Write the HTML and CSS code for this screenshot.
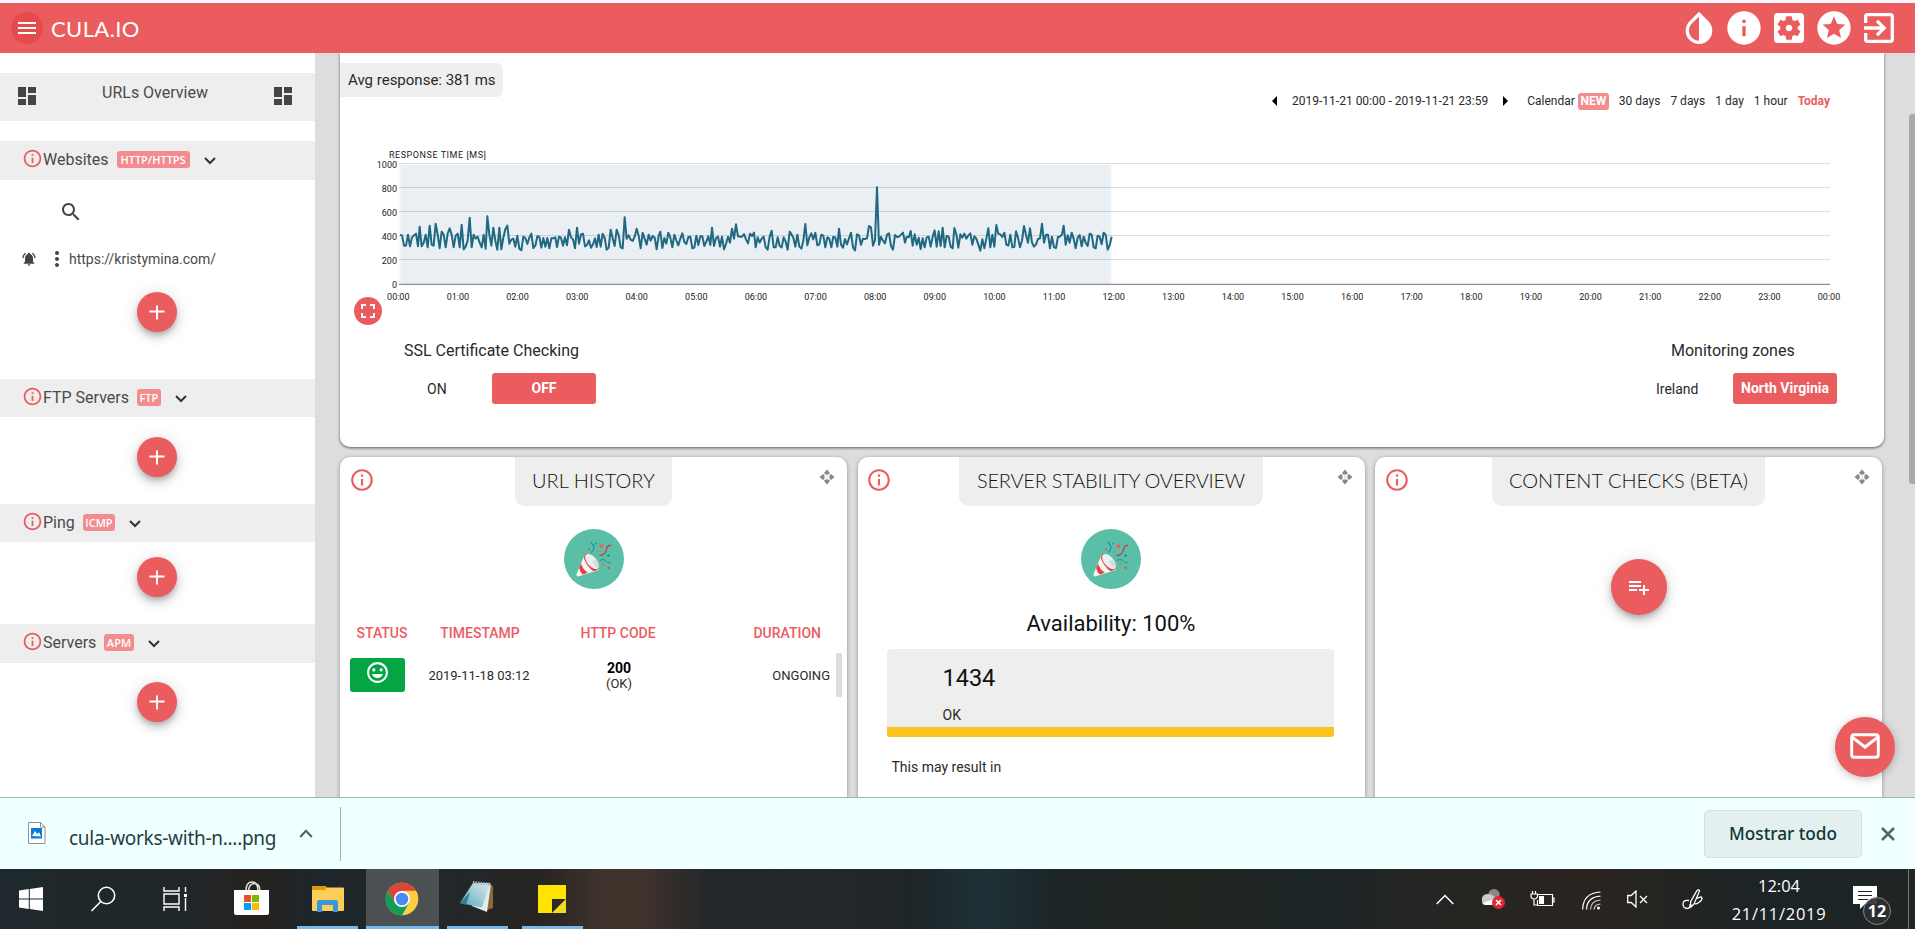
FILE: index.html
```html
<!DOCTYPE html>
<html lang="es">
<head>
<meta charset="utf-8">
<title>CULA.IO</title>
<link rel="stylesheet" href="styles.css">
</head>
<body>
<svg class="defs" width="0" height="0">
  <symbol id="info" viewBox="0 0 24 24"><path d="M11 17h2v-6h-2v6zm1-15C6.48 2 2 6.48 2 12s4.48 10 10 10 10-4.48 10-10S17.52 2 12 2zm0 18c-4.41 0-8-3.59-8-8s3.59-8 8-8 8 3.59 8 8-3.59 8-8 8zM11 9h2V7h-2v2z"/></symbol>
  <symbol id="dash" viewBox="0 0 24 24"><path d="M3 13h8V3H3v10zm0 8h8v-6H3v6zm10 0h8V11h-8v10zm0-18v6h8V3h-8z"/></symbol>
  <symbol id="plus" viewBox="0 0 24 24"><path d="M19.5 13h-6.6v7h-1.9v-7H4.500v-1.900H11V6h1.900v5.100h6.600z" transform="translate(0 -.5)"/></symbol>
  <symbol id="chev" viewBox="0 0 12 8"><path d="M1 1l5 5 5-5" fill="none" stroke="#333" stroke-width="2"/></symbol>
  <symbol id="move" viewBox="0 0 16 16"><path d="M8 .5l3 3.500-1.300 1.500H6.300L5 4zM8 15.500l3-3.500-1.300-1.500H6.300L5 12zM.5 8L4 5l1.500 1.300v3.400L4 11zM15.500 8L12 5l-1.500 1.300v3.400L12 11z"/><path d="M7.600 6h.8v4h-.8z" opacity=".5"/></symbol>
  <symbol id="party" viewBox="0 0 60 60">
    <circle cx="30" cy="30" r="30" fill="#5bbfa8"/>
    <path d="M21 25l14 16-21 6.500q-2-.5-1.500-2.500z" fill="#f5f5f5"/>
    <path d="M21 25l3.500 1 9.500 12-.5 3-4 1.300q-7-5-9.700-13.300zM17 34.500q1.500 5.500 6.800 9.300l-5 1.800q-2.800-2.200-3.700-6.500z" fill="#e8413f"/>
    <ellipse cx="28" cy="32.500" rx="9" ry="4.800" transform="rotate(50 28 32.500)" fill="#eceff0"/>
    <path d="M28 32.500l5.500 7q2-1 1-4l-3-5z" fill="#d5dadd"/>
    <g fill="none" stroke-width="1.100"><path d="M27 13q1 2 2.500 3.500 1.500 4-2.500 7" stroke="#1689b8"/><path d="M47 16.500q-4-.5-4.500 4-1 6-7 6" stroke="#c63a40" stroke-width="1.300"/><path d="M36 32q3-3 5-.5t6 2" stroke="#19a596"/></g>
    <path d="M37.500 14l.8 2h2.200l-1.700 1.300.7 2.200-2-1.300-2 1.300.7-2.200-1.700-1.300h2.200z" fill="#f15b5f"/>
    <path d="M39.200 33l.5 1.500h1.600l-1.200 1 .4 1.500-1.300-.9-1.300.9.4-1.500-1.200-1h1.600z" fill="#e07e34"/>
    <g fill="#e0504c"><circle cx="25" cy="20.500" r="1.100"/><circle cx="44.700" cy="38.800" r="1.300"/></g><circle cx="34" cy="22.500" r="1" fill="#e07e34"/><circle cx="44.500" cy="26.500" r="1.200" fill="#1689b8"/><circle cx="32.200" cy="14.500" r="1.100" fill="#19a596"/>
  </symbol>
</svg>

<header class="topbar">
  <span class="menu"><svg width="24" height="24" viewBox="0 0 24 24"><path d="M3 18h18v-2H3v2zm0-5h18v-2H3v2zm0-7v2h18V6H3z"/></svg></span>
  <span class="brand">CULA.IO</span>
  <nav class="actions">
    <svg viewBox="0 0 24 24"><path d="M17.660 7.930L12 2.270 6.340 7.930c-3.120 3.120-3.120 8.190 0 11.310C7.900 20.800 9.950 21.580 12 21.580s4.100-.78 5.660-2.340c3.120-3.120 3.120-8.190 0-11.310zM12 19.590c-1.600 0-3.110-.62-4.240-1.760C6.620 16.690 6 15.190 6 13.590s.62-3.110 1.760-4.240L12 5.100v14.490z"/></svg>
    <svg viewBox="0 0 24 24"><path d="M12 2C6.480 2 2 6.480 2 12s4.480 10 10 10 10-4.480 10-10S17.520 2 12 2zm1 15h-2v-6h2v6zm0-8h-2V7h2v2z"/></svg>
    <svg viewBox="0 0 24 24"><path d="M12 10c-1.100 0-2 .9-2 2s.9 2 2 2 2-.9 2-2-.9-2-2-2zm7-7H5c-1.110 0-2 .9-2 2v14c0 1.100.890 2 2 2h14c1.110 0 2-.9 2-2V5c0-1.100-.890-2-2-2zm-1.750 9c0 .23-.02.46-.05.68l1.480 1.160c.13.11.17.3.08.45l-1.400 2.420c-.09.15-.27.21-.43.15l-1.740-.7c-.36.28-.76.51-1.180.69l-.26 1.850c-.03.17-.18.3-.35.3h-2.800c-.17 0-.32-.13-.35-.29l-.26-1.850c-.43-.18-.82-.41-1.180-.69l-1.740.7c-.16.06-.34 0-.43-.15l-1.400-2.420c-.09-.15-.05-.34.08-.45l1.480-1.160c-.03-.23-.05-.46-.05-.69s.02-.46.05-.68l-1.480-1.160c-.13-.11-.17-.3-.08-.45l1.400-2.420c.09-.15.27-.21.430-.15l1.740.7c.36-.28.76-.51 1.180-.69l.26-1.850c.03-.17.18-.3.35-.3h2.800c.17 0 .32.130.35.29l.26 1.850c.43.180.82.41 1.180.69l1.740-.7c.16-.06.34 0 .43.15l1.400 2.420c.09.15.05.34-.08.45l-1.480 1.160c.03.230.05.460.05.690z"/></svg>
    <svg viewBox="0 0 24 24"><path d="M11.990 2C6.470 2 2 6.480 2 12s4.470 10 9.990 10C17.520 22 22 17.520 22 12S17.520 2 11.990 2zm4.240 16L12 15.450 7.770 18l1.120-4.810-3.730-3.230 4.920-.42L12 5l1.920 4.530 4.920.42-3.730 3.230L16.230 18z"/></svg>
    <svg viewBox="0 0 24 24"><path d="M10.090 15.590L11.500 17l5-5-5-5-1.410 1.410L12.670 11H3v2h9.670l-2.580 2.590zM19 3H5c-1.110 0-2 .9-2 2v4h2V5h14v14H5v-4H3v4c0 1.100.890 2 2 2h14c1.100 0 2-.9 2-2V5c0-1.100-.9-2-2-2z"/></svg>
  </nav>
</header>

<div class="page">
  <aside class="sidebar">
    <div class="overview"><svg><use href="#dash"/></svg><span>URLs Overview</span><svg><use href="#dash"/></svg></div>
    <div class="group tall"><svg class="gi"><use href="#info"/></svg><span class="gname">Websites</span><span class="tag http">HTTP/HTTPS</span><svg class="chev"><use href="#chev"/></svg></div>
    <div class="sites">
      <svg class="search" viewBox="0 0 24 24"><path d="M15.500 14h-.79l-.28-.27C15.410 12.590 16 11.110 16 9.500 16 5.910 13.090 3 9.500 3S3 5.910 3 9.500 5.910 16 9.500 16c1.610 0 3.090-.59 4.230-1.570l.27.28v.79l5 4.990L20.490 19l-4.990-5zm-6 0C7.010 14 5 11.990 5 9.500S7.010 5 9.500 5 14 7.010 14 9.500 11.990 14 9.500 14z"/></svg>
      <div class="site"><svg width="16" height="16" viewBox="0 0 24 24"><path d="M7.580 4.080L6.150 2.650C3.750 4.480 2.170 7.300 2.030 10.500h2c.15-2.650 1.510-4.970 3.550-6.420zm12.390 6.420h2c-.15-3.200-1.730-6.020-4.120-7.850l-1.420 1.430c2.020 1.450 3.390 3.770 3.540 6.420zM18 11c0-3.070-1.640-5.640-4.500-6.320V4c0-.83-.67-1.500-1.500-1.500s-1.500.67-1.500 1.500v.68C7.630 5.360 6 7.920 6 11v5l-2 2v1h16v-1l-2-2v-5zm-6 11c1.100 0 2-.9 2-2h-4c0 1.100.9 2 2 2z"/></svg><svg width="24" height="24" viewBox="0 0 24 24"><path d="M12 8c1.100 0 2-.9 2-2s-.9-2-2-2-2 .9-2 2 .9 2 2 2zm0 2c-1.100 0-2 .9-2 2s.9 2 2 2 2-.9 2-2-.9-2-2-2zm0 6c-1.100 0-2 .9-2 2s.9 2 2 2 2-.9 2-2-.9-2-2-2z"/></svg><span>https://kristymina.com/</span></div>
      <span class="fab"><svg><use href="#plus"/></svg></span>
    </div>
    <div class="group"><svg class="gi"><use href="#info"/></svg><span class="gname">FTP Servers</span><span class="tag">FTP</span><svg class="chev"><use href="#chev"/></svg></div>
    <div class="adder ftp"><span class="fab"><svg><use href="#plus"/></svg></span></div>
    <div class="group"><svg class="gi"><use href="#info"/></svg><span class="gname">Ping</span><span class="tag">ICMP</span><svg class="chev"><use href="#chev"/></svg></div>
    <div class="adder ping"><span class="fab"><svg><use href="#plus"/></svg></span></div>
    <div class="group tall"><svg class="gi"><use href="#info"/></svg><span class="gname">Servers</span><span class="tag">APM</span><svg class="chev"><use href="#chev"/></svg></div>
    <div class="adder apm"><span class="fab"><svg><use href="#plus"/></svg></span></div>
  </aside>

  <main class="content">
    <section class="card monitor">
      <div class="mhead">
        <span class="avg">Avg response: 381 ms</span>
        <div class="range"><i class="prev"></i><span class="dates">2019-11-21 00:00 - 2019-11-21 23:59</span><i class="next"></i><span class="cal">Calendar</span><span class="tag new">NEW</span><span class="opt">30 days</span><span class="opt">7 days</span><span class="opt">1 day</span><span class="opt">1 hour</span><span class="opt today">Today</span></div>
      </div>
      <svg class="chart" viewBox="340 140 1544 157">
        <defs><linearGradient id="fade" x1="0" x2="1"><stop offset="0" stop-color="#eaeff3" stop-opacity="0"/><stop offset=".006" stop-color="#eaeff3"/><stop offset=".995" stop-color="#eaeff3"/><stop offset="1" stop-color="#eaeff3" stop-opacity="0"/></linearGradient></defs>
        <rect x="398" y="165" width="715" height="119" fill="url(#fade)"/>
        <path d="M399 163.500H1830M399 187.500H1830M399 211.500H1830M399 235.500H1830M399 259.500H1830" stroke="#000" stroke-opacity=".13"/>
        <path d="M399 284.500H1830" stroke="#888d90"/><path d="M399 283.500H1830" stroke="#000" stroke-opacity=".1"/>
        <g fill="none" stroke="#1f6982" stroke-width="6" stroke-linejoin="round">
          <polyline transform="translate(340 140) scale(.33333)" points="180,284 186,286 192,317 198,317 204,284 210,319 216,292 222,286 228,281 234,319 239,260 245,319 251,308 257,284 263,322 269,257 275,314 281,317 287,251 293,284 299,325 305,275 311,284 317,322 323,281 329,265 335,284 341,322 347,287 353,281 359,322 365,254 371,328 377,320 383,302 389,233 395,322 401,284 407,296 413,290 419,308 425,322 431,284 437,326 442,229 448,284 454,317 460,263 466,302 472,329 478,263 484,328 490,293 496,268 502,257 508,311 514,299 520,296 526,320 532,287 538,326 544,331 550,290 556,294 562,312 568,293 574,281 580,324 586,317 592,289 598,290 604,323 610,294 616,320 622,294 628,325 634,295 640,295 646,292 651,321 657,290 663,293 669,317 675,292 681,316 687,269 693,292 699,298 705,325 711,263 717,311 723,283 729,281 735,319 741,315 747,301 753,323 759,313 765,295 770,321 776,284 782,320 788,281 794,294 800,329 806,323 812,269 818,295 824,318 830,269 836,285 842,322 848,325 854,232 860,296 866,286 872,299 878,303 884,290 890,266 896,287 902,325 908,278 914,296 920,314 926,284 932,302 938,288 944,293 950,328 956,287 961,275 967,324 973,294 979,311 985,278 991,293 997,322 1003,284 1009,301 1015,316 1021,296 1027,280 1033,306 1039,312 1045,291 1051,290 1057,325 1063,323 1069,287 1075,315 1081,289 1087,289 1093,318 1099,305 1105,289 1111,315 1116,263 1122,318 1128,294 1134,290 1140,320 1146,290 1152,328 1158,312 1164,290 1170,308 1176,266 1182,296 1188,253 1194,289 1200,290"/>
          <polyline transform="translate(740 140) scale(.33333)" points="0,290 6,290 12,282 18,298 24,310 30,281 36,288 42,278 47,322 53,292 59,308 65,296 71,290 77,322 83,329 89,290 95,272 101,322 107,322 113,292 119,318 125,322 131,292 137,305 143,329 149,275 155,284 160,293 166,320 172,284 178,320 184,326 190,302 196,252 202,316 208,292 214,280 220,298 226,278 232,316 238,313 244,284 250,287 256,322 262,292 268,296 274,322 280,290 286,293 292,320 297,266 303,314 309,323 315,297 321,313 327,295 333,278 339,322 345,331 351,283 357,286 363,314 369,296 375,297 381,295 387,258 393,262 399,317 405,300 411,142 417,314 423,290 429,302 435,310 441,284 447,280 453,318 459,329 465,285 471,291 477,290 483,284 489,278 495,308 500,290 506,292 512,273 518,317 524,283 530,314 536,293 542,327 548,295 554,322 560,292 566,290 572,320 578,290 584,271 590,320 596,274 602,318 608,263 614,322 620,288 626,290 632,320 638,325 643,264 649,282 655,323 661,283 667,293 673,281 679,296 685,286 691,280 697,314 703,289 709,296 715,314 721,332 727,298 733,325 739,296 745,265 751,322 757,284 763,320 769,255 775,281 781,283 787,291 793,278 799,314 805,317 811,284 817,322 823,321 828,274 834,293 840,322 846,302 852,258 858,284 864,308 870,265 876,308 882,320 888,313 894,297 900,295 906,251 912,308 918,284 924,284 930,325 936,290 942,322 948,324 954,290 960,290 966,283 971,257 977,314 983,286 989,308 995,278 1001,296 1007,325 1013,293 1019,285 1025,319 1031,290 1037,308 1043,318 1049,281 1055,284 1061,322 1067,325 1073,287 1079,290 1085,313 1091,278 1097,284 1103,329 1109,316 1115,290"/>
        </g>
        <text x="389" y="158" textLength="97">RESPONSE TIME [MS]</text>
        <g text-anchor="end"><text x="397" y="168">1000</text><text x="397" y="192">800</text><text x="397" y="216">600</text><text x="397" y="240">400</text><text x="397" y="264">200</text><text x="397" y="288">0</text></g>
        <g text-anchor="middle" class="hours"><text x="398.300" y="300">00:00</text><text x="457.900" y="300">01:00</text><text x="517.500" y="300">02:00</text><text x="577.100" y="300">03:00</text><text x="636.700" y="300">04:00</text><text x="696.300" y="300">05:00</text><text x="755.900" y="300">06:00</text><text x="815.500" y="300">07:00</text><text x="875.100" y="300">08:00</text><text x="934.800" y="300">09:00</text><text x="994.400" y="300">10:00</text><text x="1054" y="300">11:00</text><text x="1113.700" y="300">12:00</text><text x="1173.300" y="300">13:00</text><text x="1232.900" y="300">14:00</text><text x="1292.500" y="300">15:00</text><text x="1352.100" y="300">16:00</text><text x="1411.700" y="300">17:00</text><text x="1471.300" y="300">18:00</text><text x="1530.900" y="300">19:00</text><text x="1590.500" y="300">20:00</text><text x="1650.200" y="300">21:00</text><text x="1709.800" y="300">22:00</text><text x="1769.400" y="300">23:00</text><text x="1829" y="300">00:00</text></g>
      </svg>
      <span class="full"><svg width="24" height="24" viewBox="0 0 24 24"><path d="M7 14H5v5h5v-2H7v-3zm-2-4h2V7h3V5H5v5zm12 7h-3v2h5v-5h-2v3zM14 5v2h3v3h2V5h-5z"/></svg></span>
      <div class="settings">
        <div class="setting ssl"><h4>SSL Certificate Checking</h4><div class="choices"><span class="off">ON</span><b class="on">OFF</b></div></div>
        <div class="setting zones"><h4>Monitoring zones</h4><div class="choices"><span class="off">Ireland</span><b class="on">North Virginia</b></div></div>
      </div>
    </section>

    <div class="cards">
      <section class="card">
        <div class="chead"><svg class="cinfo"><use href="#info"/></svg><h3 class="t1">URL HISTORY</h3><svg class="cmove"><use href="#move"/></svg></div>
        <svg class="party"><use href="#party"/></svg>
        <div class="row thead"><b>STATUS</b><b>TIMESTAMP</b><b>HTTP CODE</b><b class="end">DURATION</b></div>
        <div class="row tbody"><span class="ok"><svg width="25" height="25" viewBox="0 0 24 24"><path d="M11.990 2C6.470 2 2 6.480 2 12s4.470 10 9.990 10C17.520 22 22 17.520 22 12S17.520 2 11.990 2zM12 20c-4.420 0-8-3.580-8-8s3.580-8 8-8 8 3.580 8 8-3.580 8-8 8zm3.500-9c.83 0 1.500-.67 1.500-1.500S16.330 8 15.500 8 14 8.670 14 9.500s.67 1.500 1.500 1.500zm-7 0c.83 0 1.500-.67 1.500-1.500S9.330 8 8.500 8 7 8.670 7 9.500 7.670 11 8.500 11zM6.800 13.500c.7 2.300 2.700 4 5.200 4s4.500-1.700 5.200-4z"/></svg></span><span>2019-11-18 03:12</span><span class="code"><b>200</b>(OK)</span><span class="end">ONGOING<i class="thumb"></i></span></div>
      </section>
      <section class="card">
        <div class="chead"><svg class="cinfo"><use href="#info"/></svg><h3 class="t2">SERVER STABILITY OVERVIEW</h3><svg class="cmove"><use href="#move"/></svg></div>
        <svg class="party"><use href="#party"/></svg>
        <p class="avail">Availability: 100%</p>
        <div class="stat"><strong>1434</strong><span>OK</span></div>
        <p class="note">This may result in</p>
      </section>
      <section class="card">
        <div class="chead"><svg class="cinfo"><use href="#info"/></svg><h3 class="t3">CONTENT CHECKS (BETA)</h3><svg class="cmove"><use href="#move"/></svg></div>
        <span class="fab big"><svg width="24" height="24" viewBox="0 0 24 24"><path d="M14 10H2v2h12v-2zm0-4H2v2h12V6zm4 8v-4h-2v4h-4v2h4v4h2v-4h4v-2h-4zM2 16h8v-2H2v2z"/></svg></span>
      </section>
    </div>
  </main>
  <i class="scrollbar"></i>
  <span class="mail"><svg width="30" height="26" viewBox="0 0 30 26"><rect x="1.700" y="1.700" width="26.600" height="22.600" rx="2.500" fill="none" stroke="#fff" stroke-width="3"/><path d="M2.500 4.500L15 14l12.500-9.500" fill="none" stroke="#fff" stroke-width="3"/></svg></span>
</div>

<div class="downloads">
  <svg class="file" width="18" height="22" viewBox="0 0 18 22"><path d="M.5.5h12l4.500 4.500v16.500H.5z" fill="#fff" stroke="#8a8f90"/><path d="M12.500.5V5H17" fill="none" stroke="#8a8f90"/><path d="M3 6h11v10.500H3z" fill="#0a78d4"/><path d="M4 14l3-5 2.500 3L11 10l2 4.500z" fill="#f3fbff"/></svg>
  <span class="fname">cula-works-with-n....png</span>
  <svg class="up" width="14" height="9" viewBox="0 0 14 9"><path d="M1.200 8L7 1.800 12.800 8" fill="none" stroke="#4d6766" stroke-width="2.200"/></svg>
  <i class="sep"></i>
  <span class="showall">Mostrar todo</span>
  <svg class="close" width="14" height="14" viewBox="0 0 14 14"><path d="M1 1l12 12M13 1L1 13" stroke="#4d6766" stroke-width="2.500"/></svg>
</div>

<footer class="taskbar">
  <span class="task w1"><svg width="24" height="24" viewBox="0 0 24 24" fill="#fff"><path d="M0 3.400l9.800-1.400v9.500H0zM10.800 1.900L24 0v11.500H10.800zM0 12.500h9.800V22L0 20.600zM10.800 12.500H24V24l-13.200-1.900z"/></svg></span>
  <span class="task w2"><svg width="26" height="26" viewBox="0 0 26 26" fill="none" stroke="#fff" stroke-width="1.600"><circle cx="16.500" cy="9.500" r="8.200"/><path d="M10.800 15.500L1.500 25"/></svg></span>
  <span class="task w3"><svg width="25" height="24" viewBox="0 0 25 24" fill="none" stroke="#fff" stroke-width="1.400"><path d="M1 0v4h15V0M1 24v-4h15v4M1 7h15v10H1zM22.500 0v5M22.500 11v13"/><path d="M21 7h3v3h-3z" fill="#fff" stroke="none"/></svg></span>
  <span class="task w4"><svg width="36" height="36" viewBox="0 0 36 36"><path d="M12 11Q12 2 18 2t6 9M14.500 11Q15 4 20 3.500q6 0 6 7.500" fill="none" stroke="#ddd" stroke-width="1.500"/><path d="M0 10h35v23q0 2-2 2H2q-2 0-2-2z" fill="#fff"/><path d="M10 15h7v7h-7z" fill="#f04e23"/><path d="M18 15h7v7h-7z" fill="#7cb800"/><path d="M10 23h7v7h-7z" fill="#00a3ee"/><path d="M18 23h7v7h-7z" fill="#feb801"/></svg></span>
  <span class="task w5 open"><svg width="32" height="28" viewBox="0 0 32 28"><path d="M0 2q0-1 1-1h11q2 0 3 1.500h16q1 0 1 1V25q0 1-1 1H1q-1 0-1-1z" fill="#fdce57"/><path d="M0 2q0-1 1-1h11q2 0 3 1.200L13 5H0z" fill="#dc9a0b"/><path d="M5 27V17q0-2 2-2h17q2 0 2 2v10h-5v-7H10v7z" fill="#3b94dc"/></svg></span>
  <span class="task w6 open active"><svg width="34" height="34" viewBox="0 0 34 34"><circle cx="17" cy="17" r="16.300" fill="#ffcd42"/><path d="M2.900 8.850A16.300 16.300 0 0 1 31.100 8.850H17l-7.100 12.300z" fill="#db4437"/><path d="M2.900 8.850A16.300 16.300 0 0 0 17 33.300l7.050-12.200L17 24.500l-7.200-3.800z" fill="#0f9d58"/><circle cx="17" cy="17" r="8" fill="#fff"/><circle cx="17" cy="17" r="6.300" fill="#4a8af4"/></svg></span>
  <span class="task w7 open"><svg width="34" height="34" viewBox="0 0 34 34"><defs><linearGradient id="np" x1="0" y1="1" x2="1" y2="0"><stop offset="0" stop-color="#4fa3b4"/><stop offset=".5" stop-color="#9ccbd6"/><stop offset="1" stop-color="#d5e9ed"/></linearGradient></defs><path d="M31 5l2 1v22l-6 2z" fill="#8b6a35"/><path d="M31 5l-4 27L12 26 15 3z" fill="#e5eaed"/><path d="M13 3h17l-8 24.500L0 23z" fill="url(#np)"/><path d="M0 23L10 12 6 25z" fill="#2e7f92"/><path d="M13 2.500l18 2" stroke="#aeb6b9" stroke-width="3" stroke-dasharray="1.500 1"/></svg></span>
  <span class="task w8 open"><svg width="28" height="28" viewBox="0 0 28 28"><path d="M0 0h28v14L14 28H0z" fill="#ffe400"/><path d="M14 14h14L14 28z" fill="#2b2a26"/><path d="M28 14v14H14z" fill="#f3dc1c"/></svg></span>
  <div class="tray">
    <svg class="t-up" width="18" height="11" viewBox="0 0 18 11"><path d="M.7 10L9 1.500l8.300 8.500" fill="none" stroke="#fff" stroke-width="1.500"/></svg>
    <svg class="t-cloud" width="25" height="20" viewBox="0 0 25 20"><path d="M7 6Q8 0 13 0q5 0 6 6l-7 7z" fill="#888"/><path d="M1 12Q0 5 7 5q5 0 8 5l3 6H4q-3 0-3-4z" fill="#c9c9c9"/><path d="M2 14l14-5 4 7H6q-3 0-4-2z" fill="#fff"/><circle cx="17.500" cy="13.500" r="6.500" fill="#dc2a30"/><path d="M15 11l5 5M20 11l-5 5" stroke="#fff" stroke-width="1.600"/></svg>
    <svg class="t-bat" width="25" height="18" viewBox="0 0 25 18"><path d="M8 4.500h14.500v11H7.500V10M23 8h1v4h-1" fill="none" stroke="#fff" stroke-width="1.200"/><path d="M9 6h5v8H9z" fill="#fff"/><path d="M2.500 1v3M5.500 1v3M1 4h6.500v2.500Q7 9 4.200 9T1 6.500zM4 9v6h3.500" fill="none" stroke="#fff" stroke-width="1.200"/></svg>
    <svg class="t-wifi" width="19" height="19" viewBox="0 0 19 19" fill="none" stroke="#fff" stroke-width="1.200"><path d="M.7 18.500Q1 2 18.500 1M4.500 18.500Q5 6 18.500 5.200" /><path d="M8.500 18.500Q9 9.500 18.500 9M12 18.500Q12.500 13.500 18.500 13" opacity=".75"/><circle cx="16.500" cy="17" r="1.500" fill="#fff" stroke="none"/></svg>
    <svg class="t-vol" width="21" height="18" viewBox="0 0 21 18" fill="none" stroke="#fff" stroke-width="1.300"><path d="M.7 5.500h3.500L9 1v16l-4.800-4.500H.7zM13 6l7 7M20 6l-7 7"/></svg>
    <svg class="t-pen" width="21" height="21" viewBox="0 0 21 21" fill="none" stroke="#fff" stroke-width="1.300"><path d="M7 11.500Q1 10.500 1 15t4.500 4.500Q8.500 19 8 15M9 18l-.5-5L15 1.500q2-1.500 2.500.5L12 15zM15 9.500q5-3 5 0 0 2-4 4.500-2 1.500-3 .5"/></svg>
    <div class="clock"><span>12:04</span><span class="date">21/11/2019</span></div>
    <div class="notif"><svg width="24" height="24" viewBox="0 0 24 24"><path d="M0 0h24v18H12l-5 5v-5H0z" fill="#fff"/><path d="M5 5.500h14M5 9.500h14M5 13.500h10" stroke="#222" stroke-width="1.200"/></svg><b>12</b></div>
    <i class="peek"></i>
  </div>
</footer>
</body>
</html>
```
FILE: styles.css
```css
* { box-sizing: border-box; }
body { margin: 0; width: 1915px; height: 929px; overflow: hidden; display: flex; flex-direction: column; font-family: Roboto, "Liberation Sans", sans-serif; color: #2a2a2a; border-top: 3px solid #f3f7fb; }
h3, h4, p { margin: 0; font-weight: 400; }
svg { display: block; flex: none; }
.defs { position: absolute; }

.topbar { height: 50px; flex: none; background: #eb5c5f; display: flex; align-items: center; padding: 0 16px 0 11px; fill: #fff; color: #fff; }
.menu { width: 32px; height: 32px; border-radius: 50%; background: #e64a4d; display: flex; align-items: center; justify-content: center; }
.brand { font-family: Lato, sans-serif; font-size: 22px; margin-left: 8px; letter-spacing: .4px; }
.actions { margin-left: auto; display: flex; gap: 5px; }
.actions svg { width: 40px; height: 40px; }

.page { position: relative; height: 744px; flex: none; display: flex; background: #ddd; overflow: hidden; }
.sidebar { width: 315px; flex: none; background: #fff; padding-top: 20px; color: #4a4a4a; fill: #444; }
.overview { height: 48px; background: #eee; display: flex; justify-content: space-between; align-items: center; padding: 0 20px 0 15px; margin-bottom: 20px; font-size: 16px; }
.overview svg { width: 24px; height: 24px; margin-top: -2px; }
.overview span { padding-bottom: 9px; }
.group { height: 38px; background: #eee; display: flex; align-items: center; padding: 0 0 1px 22px; }
.group.tall { height: 39px; padding-bottom: 2px; }
.gi { width: 21px; height: 21px; fill: #eb5c5f; margin-top: -2px; }
.gname { font-size: 16px; }
.tag { font-family: "Open Sans", sans-serif; font-size: 11px; font-weight: 600; line-height: 17px; height: 17px; padding: 0 2.5px; border-radius: 3px; background: #f38c8e; color: #fff; margin-left: 8px; }
.http { width: 73px; text-align: center; padding: 0; }
.chev { width: 12px; height: 8px; margin: 3px 0 0 14px; }
.sites { height: 199px; padding-top: 20px; }
.search { width: 24px; height: 24px; margin-left: 59px; }
.site { display: flex; align-items: center; gap: 8px; height: 24px; margin: 23px 0 21px; padding-left: 21px; font-size: 14px; }
.site span { margin-left: -8px; }
.fab { display: flex; align-items: center; justify-content: center; width: 40px; height: 40px; border-radius: 50%; margin: 0 auto 0 137px; background: #eb5c5f; fill: #fff; box-shadow: 0 3px 5px -1px rgba(0,0,0,.2), 0 6px 10px rgba(0,0,0,.14), 0 1px 18px rgba(0,0,0,.12); }
.fab svg { width: 24px; height: 24px; }
.ftp { height: 87px; padding-top: 20px; }
.ping { height: 82px; padding-top: 15px; }
.apm { padding-top: 19px; }

.content { width: 1544px; margin-left: 25px; }
.card { background: #fff; border-radius: 10px; box-shadow: 0 1px 4px rgba(0,0,0,.35); }
.monitor { height: 394px; padding-top: 10px; border-radius: 0 0 10px 10px; box-shadow: 0 1px 3px rgba(0,0,0,.6); }
.mhead { height: 77px; display: flex; align-items: flex-start; justify-content: space-between; }
.avg { height: 34px; line-height: 34px; background: #eee; border-radius: 0 7px 7px 0; width: 163px; padding-left: 8px; font-size: 15px; white-space: nowrap; }
.range { display: flex; align-items: center; height: 20px; margin-top: 28px; padding-right: 54px; font-size: 12px; white-space: nowrap; }
.prev { border: 5px solid transparent; border-right-color: #000; border-left: 0; }
.next { border: 5px solid transparent; border-left-color: #000; border-right: 0; }
.dates { margin: 0 15px; }
.cal { margin-left: 19px; }
.new { width: 31px; text-align: center; margin-left: 3px; font-family: Roboto, sans-serif; font-weight: 700; font-size: 12px; padding: 0; }
.opt { margin-left: 10px; }
.today { color: #eb5c5f; font-weight: 700; }
.chart { width: 1544px; height: 157px; overflow: visible; font-size: 9px; fill: #222; }
.full { display: flex; align-items: center; justify-content: center; width: 28px; height: 28px; margin: 0 0 16px 14px; border-radius: 50%; background: #eb5c5f; fill: #fff; position: relative; }
.settings { display: flex; justify-content: space-between; padding: 0 47px 0 63px; }
.setting h4 { font-size: 16px; line-height: 20px; margin-bottom: 12px; }
.choices { display: flex; align-items: center; font-size: 14px; height: 31px; }
.on { height: 31px; line-height: 31px; border-radius: 3px; background: #eb5c5f; color: #fff; text-align: center; }
.ssl { padding-left: 1px; }
.ssl .off { width: 88px; padding-left: 23px; }
.ssl .on { width: 104px; }
.zones h4 { padding-left: 15px; }
.zones .off { width: 77px; }
.zones .on { width: 104px; }

.cards { display: flex; gap: 10.5px; margin-top: 10px; }
.cards .card { width: 507px; height: 380px; flex: none; }
.chead { display: grid; grid-template-columns: 1fr auto 1fr; height: 50px; }
.chead h3 { background: #eee; border-radius: 0 0 10px 10px; height: 49px; line-height: 46px; font-family: Lato, sans-serif; font-weight: 300; font-size: 20px; text-align: center; white-space: nowrap; color: #111; }
.t1 { width: 157px; }
.t2 { width: 304px; letter-spacing: -.25px; }
.t3 { width: 273px; }
.cinfo { width: 26px; height: 26px; margin: 10px 0 0 8.500px; fill: #eb5c5f; }
.cmove { width: 16px; height: 16px; margin: 12px 12px 0 auto; fill: #888; }
.party { width: 60px; height: 60px; margin: 22px auto 0; }
.row { display: grid; grid-template-columns: 84px 110px 170px 1fr; text-align: center; align-items: center; }
.thead { margin-top: 34px; height: 20px; font-size: 14px; color: #eb5c5f; grid-template-columns: 84px 112px 164px 1fr; }
.thead b { font-weight: 500; }
.row .end { text-align: right; padding-right: 26px; }
.tbody { height: 44px; margin-top: 10px; font-size: 13px; }
.tbody .end { padding-right: 5px; display: flex; justify-content: flex-end; align-items: center; gap: 6px; }
.ok { width: 55px; height: 34px; margin-left: 10px; border-radius: 3px; background: #04a643; fill: #fff; display: flex; justify-content: center; padding-top: 2px; }
.code { line-height: 16px; padding-top: 1px; }
.code b { display: block; font-size: 14px; font-weight: 700; color: #000; }
.thumb { width: 6px; height: 44px; background: #ddd; border-radius: 1px; }
.avail { font-size: 22px; line-height: 30px; margin-top: 20px; text-align: center; color: #111; }
.stat { width: 447px; height: 88px; margin: 10px 0 0 29px; background: #eee; border-bottom: 10px solid #fbc41e; border-radius: 3px; padding: 14px 0 0 56px; }
.stat strong { display: block; font-weight: 400; font-size: 23.500px; line-height: 30px; color: #111; }
.stat span { display: block; font-size: 14px; line-height: 20px; margin-top: 12px; }
.note { font-size: 14px; line-height: 20px; margin: 20px 0 0 34px; }
.big { width: 56px; height: 56px; margin: 52px auto 0 236px; }
.scrollbar { position: absolute; right: 0; top: 61px; width: 6px; height: 370px; background: #a9a9a9; border-radius: 3px 0 0 3px; }
.mail { position: absolute; left: 1835px; top: 664px; width: 60px; height: 60px; border-radius: 50%; background: #eb5c5f; box-shadow: 0 2px 8px rgba(0,0,0,.25); display: flex; align-items: center; justify-content: center; padding-bottom: 2px; }

.downloads { height: 72px; flex: none; background: #f0ffff; border-top: 1px solid #9cb5b7; display: flex; align-items: center; font-family: "Noto Sans", "Open Sans", sans-serif; color: #23413f; }
.file { margin: -1px 0 0 28px; }
.fname { margin: 9px 0 0 23px; width: 230px; font-size: 19px; letter-spacing: -.28px; white-space: nowrap; }
.up { margin-top: -1px; }
.sep { width: 1px; height: 54px; background: #9cb5b7; margin-left: 27px; }
.showall { margin-left: auto; width: 158px; height: 48px; line-height: 46px; border: 1px solid #d9dcde; border-radius: 5px; background: #e4efef; text-align: center; font-size: 17.200px; font-weight: 500; color: #103633; }
.close { margin: 0 20px 0 19px; }

.taskbar { height: 60px; flex: none; display: flex; background: linear-gradient(90deg, #1f282c 0, #20272a 180px, #26221f 255px, #1d262a 320px, #23272a 450px, #272421 540px, #40332c 605px, #40332c 640px, #22272a 710px, #24282d 820px, #1e2528 910px, #1d3137 985px, #1c2426 1060px, #20241f 1180px, #1b2426 1310px, #252523 1420px, #2a2420 1590px, #222422 1680px, #1b2427 1790px, #202424 1915px); }
.task { display: flex; align-items: center; justify-content: center; height: 60px; }
.open { border-bottom: 3px solid #76b9ed; padding-top: 3px; }
.w1 { width: 62px; }
.w2 { width: 82px; }
.w3 { width: 62px; }
.w4 { width: 91px; }
.w4 svg { margin-top: -2px; }
.w5 { width: 61px; }
.w6 { width: 73px; margin-left: 8px; padding-right: 1px; }
.w7 { width: 61px; margin-left: 8px; padding-right: 2px; }
.w7 svg { margin-top: -4px; }
.w8 { width: 61px; margin-left: 14px; padding-right: 1px; }
.active { background: #4b5153; }
.tray { margin-left: auto; display: flex; align-items: center; height: 60px; color: #fff; }
.t-up { margin-right: 27px; }
.t-cloud { margin-right: 24px; }
.t-bat { margin-right: 27px; }
.t-wifi { margin-right: 26px; margin-top: 3px; }
.t-vol { margin-right: 34px; }
.t-pen { margin-right: 28px; }
.clock { width: 96px; font-family: "Open Sans", sans-serif; font-size: 16.500px; line-height: 28px; text-align: center; display: flex; flex-direction: column; padding-top: 1px; }
.date { letter-spacing: .7px; }
.notif { position: relative; margin: -2px 31px 0 26px; }
.notif b { position: absolute; left: 10px; top: 11px; width: 28px; height: 28px; border: 1px solid #888; border-radius: 50%; background: rgba(45,48,50,.93); font: 700 16px/26px "Open Sans", sans-serif; text-align: center; }
.peek { width: 1px; height: 60px; background: #777; margin-right: 6px; }
```
